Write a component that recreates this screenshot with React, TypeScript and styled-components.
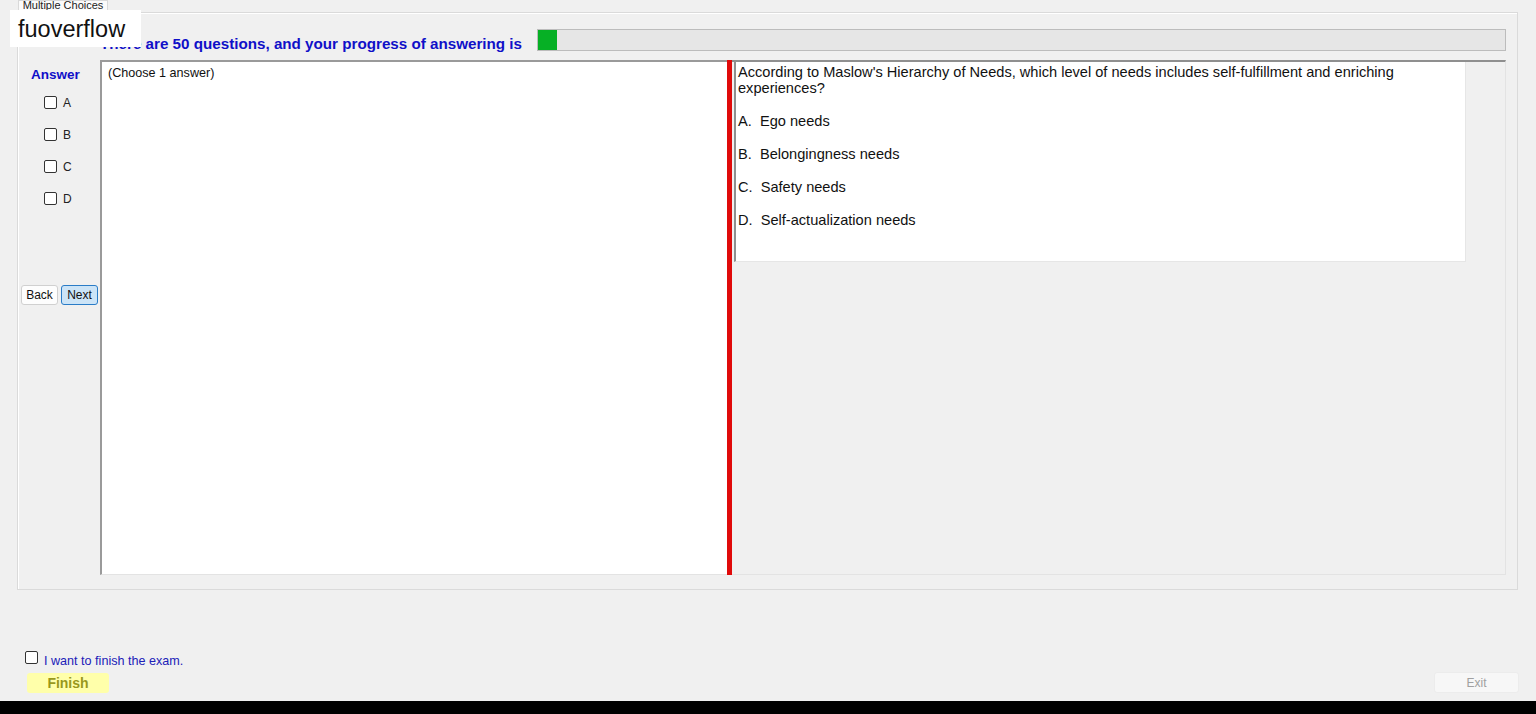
import styled, { createGlobalStyle } from "styled-components";

const GlobalStyle = createGlobalStyle`
  html, body {
    margin: 0;
    padding: 0;
    background: #f0f0f0;
  }
  body {
    font-family: "Liberation Sans", Arial, sans-serif;
  }
`;

const Screen = styled.div`
  position: relative;
  width: 1536px;
  height: 714px;
  background: #f0f0f0;
  display: flex;
  flex-direction: column;
  overflow: hidden;
`;

const Watermark = styled.div`
  position: absolute;
  left: 10px;
  top: 10px;
  width: 131px;
  height: 37px;
  background: #ffffff;
  color: #111;
  font-size: 23.5px;
  line-height: 38px;
  padding-left: 8px;
  box-sizing: border-box;
  z-index: 5;
`;

const TabArea = styled.div`
  padding: 0 18px 0 17px;
  display: flex;
  flex-direction: column;
`;

const TabStrip = styled.div`
  height: 12px;
  display: flex;
`;

const Tab = styled.div`
  margin-left: 1px;
  width: 90px;
  height: 13px;
  background: #fbfbfb;
  border: 1px solid #d9d9d9;
  border-bottom: none;
  box-sizing: border-box;
  font-size: 11px;
  line-height: 9px;
  color: #222;
  text-align: center;
  overflow: hidden;
  z-index: 1;
`;

const TabPanel = styled.div`
  height: 578px;
  border: 1px solid #dadada;
  box-shadow: inset 1px 1px 0 #ffffff;
  box-sizing: border-box;
  padding: 16px 11px 0 0;
  display: flex;
  flex-direction: column;
`;

const HeaderRow = styled.div`
  height: 22px;
  display: flex;
  align-items: flex-end;
  padding-left: 82px;
  gap: 15px;
`;

const Heading = styled.div`
  font-size: 15.2px;
  font-weight: bold;
  color: #0f0fc8;
  line-height: 14px;
  white-space: nowrap;
`;

const ProgressTrack = styled.div`
  flex: 1;
  height: 22px;
  background: #e6e6e6;
  border: 1px solid #bcbcbc;
  box-sizing: border-box;
  display: flex;
`;

const ProgressFill = styled.div`
  background: #06b025;
  height: 100%;
`;

const Body = styled.div`
  margin-top: 9px;
  height: 515px;
  display: flex;
`;

const Sidebar = styled.div`
  width: 82px;
  display: flex;
  flex-direction: column;
`;

const AnswerTitle = styled.div`
  margin: 8px 0 0 13px;
  font-size: 13.5px;
  font-weight: bold;
  color: #0f0fc8;
  line-height: 14px;
`;

const OptionList = styled.div`
  margin: 14px 0 0 26px;
  display: flex;
  flex-direction: column;
  gap: 19px;
`;

const OptionRow = styled.label`
  display: flex;
  align-items: center;
  gap: 6px;
  font-size: 12px;
  color: #222;
  height: 13px;
`;

const Box = styled.input.attrs({ type: "checkbox" })`
  appearance: none;
  margin: 0;
  width: 13px;
  height: 13px;
  border: 1px solid #333;
  border-radius: 2px;
  background: #fff;
  box-sizing: border-box;
  flex-shrink: 0;
`;

const NavRow = styled.div`
  margin: 80px 0 0 3px;
  display: flex;
  gap: 3px;
`;

const NavButton = styled.button<{ $active?: boolean }>`
  width: 37px;
  height: 20px;
  padding: 0;
  font-family: "Liberation Sans", Arial, sans-serif;
  font-size: 12px;
  color: #111;
  border-radius: 3px;
  border: 1px solid ${(p) => (p.$active ? "#2a7cc7" : "#d0d0d0")};
  background: ${(p) => (p.$active ? "#cce4f7" : "#fdfdfd")};
`;

const AnswerPane = styled.div`
  width: 627px;
  background: #ffffff;
  border-left: 2px solid #9a9a9a;
  border-top: 2px solid #9a9a9a;
  border-bottom: 1px solid #e3e3e3;
  box-sizing: border-box;
  padding: 4px 6px;
  font-size: 12.6px;
  color: #111;
`;

const Splitter = styled.div`
  width: 5px;
  background: #e00a0a;
`;

const QuestionPane = styled.div`
  flex: 1;
  background: #f0f0f0;
  border-top: 2px solid #8f8f8f;
  border-right: 1px solid #e3e3e3;
  border-bottom: 1px solid #e3e3e3;
  box-sizing: border-box;
  padding-left: 2px;
`;

const QuestionBox = styled.div`
  width: 732px;
  height: 200px;
  background: #ffffff;
  border-left: 2px solid #8f8f8f;
  border-right: 1px solid #e6e6e6;
  border-bottom: 1px solid #e6e6e6;
  box-sizing: border-box;
  padding: 2px 0 0 2px;
  font-size: 14.6px;
  line-height: 16px;
  color: #111;
`;

const QuestionText = styled.div`
  padding-right: 10px;
`;

const Choice = styled.div`
  margin-top: 17px;
  white-space: pre;
`;

const BottomArea = styled.div`
  flex: 1;
  display: flex;
  flex-direction: column;
  justify-content: flex-end;
  padding: 0 17px 8px 25px;
`;

const FinishCheck = styled.label`
  display: flex;
  align-items: flex-start;
  gap: 6px;
  font-size: 12.6px;
  color: #2020b8;
  height: 15px;
  line-height: 20px;
`;

const ButtonRow = styled.div`
  margin-top: 6px;
  display: flex;
  justify-content: space-between;
  align-items: center;
`;

const FinishButton = styled.button`
  margin-left: 2px;
  width: 82px;
  height: 20px;
  padding: 0;
  border: none;
  border-radius: 3px;
  background: #ffffaa;
  color: #98981c;
  font-family: "Liberation Sans", Arial, sans-serif;
  font-size: 14px;
  font-weight: bold;
`;

const ExitButton = styled.button`
  width: 85px;
  height: 21px;
  padding: 0;
  border: 1px solid #ececec;
  border-radius: 3px;
  background: #f7f7f7;
  color: #a0a0a0;
  font-family: "Liberation Sans", Arial, sans-serif;
  font-size: 12px;
`;

const Footer = styled.div`
  height: 13px;
  background: #000;
`;

const choices = [
  "A.  Ego needs",
  "B.  Belongingness needs",
  "C.  Safety needs",
  "D.  Self-actualization needs",
];

export default function App() {
  const progress = 2;
  return (
    <>
      <GlobalStyle />
      <Screen>
        <Watermark>fuoverflow</Watermark>
        <TabArea>
          <TabStrip>
            <Tab>Multiple Choices</Tab>
          </TabStrip>
          <TabPanel>
            <HeaderRow>
              <Heading>There are 50 questions, and your progress of answering is</Heading>
              <ProgressTrack>
                <ProgressFill style={{ width: `${progress}%` }} />
              </ProgressTrack>
            </HeaderRow>
            <Body>
              <Sidebar>
                <AnswerTitle>Answer</AnswerTitle>
                <OptionList>
                  {["A", "B", "C", "D"].map((l) => (
                    <OptionRow key={l}>
                      <Box />
                      {l}
                    </OptionRow>
                  ))}
                </OptionList>
                <NavRow>
                  <NavButton>Back</NavButton>
                  <NavButton $active>Next</NavButton>
                </NavRow>
              </Sidebar>
              <AnswerPane>(Choose 1 answer)</AnswerPane>
              <Splitter />
              <QuestionPane>
                <QuestionBox>
                  <QuestionText>
                    According to Maslow's Hierarchy of Needs, which level of needs includes self-fulfillment and enriching experiences?
                  </QuestionText>
                  {choices.map((c) => (
                    <Choice key={c}>{c}</Choice>
                  ))}
                </QuestionBox>
              </QuestionPane>
            </Body>
          </TabPanel>
        </TabArea>
        <BottomArea>
          <FinishCheck>
            <Box />
            I want to finish the exam.
          </FinishCheck>
          <ButtonRow>
            <FinishButton>Finish</FinishButton>
            <ExitButton>Exit</ExitButton>
          </ButtonRow>
        </BottomArea>
        <Footer />
      </Screen>
    </>
  );
}
